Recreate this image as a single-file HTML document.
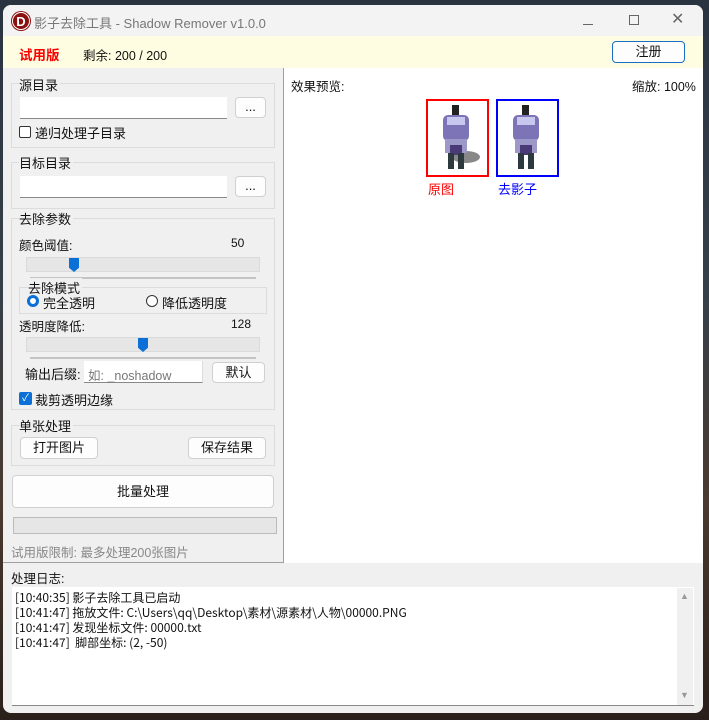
<!DOCTYPE html>
<html><head><meta charset="utf-8"><style>
*{box-sizing:border-box;margin:0;padding:0}
body{width:709px;height:720px;overflow:hidden;background:linear-gradient(180deg,#2a3340 0%,#36404a 40%,#4a3a30 70%,#2a1f1a 100%);font-family:"Liberation Sans","Noto Sans CJK SC",sans-serif;font-size:12.5px;color:#111;position:relative}
.a{position:absolute}
#win{left:3px;top:5px;width:700px;height:708px;background:#f0f0f0;border-radius:8px;overflow:hidden}
.grp{border:1px solid #dcdcdc;position:absolute}
.lbl{position:absolute;background:#f0f0f0;font-size:13px;padding-right:2px}
.inp{position:absolute;background:#fff;border-bottom:1px solid #888;height:22px}
.btn{position:absolute;background:#fdfdfd;border:1px solid #d0d0d0;border-radius:4px;text-align:center;font-size:13px}
.track{position:absolute;height:15px;background:#e6e6e6;border:1px solid #dadada}
.line{position:absolute;height:2px;background:#c4c4c4}
.thumb{position:absolute;width:10px;height:14px;background:#0a6fd6;clip-path:polygon(0 0,100% 0,100% 70%,50% 100%,0 70%)}
.log{font-family:"Liberation Sans Narrow","Noto Sans CJK SC",sans-serif}
</style></head><body>
<div id="win" class="a">
 <div class="a" style="left:0;top:0;width:700px;height:31px;background:#f3f3f3"></div>
 <div class="a" style="left:9px;top:7px;width:18px;height:18px;border-radius:50%;background:#8b1010;color:#fff;font-weight:bold;font-size:13px;text-align:center;line-height:18px;border:1.5px solid #fff;box-shadow:0 0 0 1px #8b1010">D</div>
 <div class="a" style="left:31px;top:8px;font-size:13px;color:#777">影子去除工具 - Shadow Remover v1.0.0</div>
 <div class="a" style="left:580px;top:19px;width:10px;height:1px;background:#666"></div>
 <div class="a" style="left:626px;top:10px;width:10px;height:10px;border:1px solid #666"></div>
 <div class="a" style="left:668px;top:4px;font-size:16px;color:#666">✕</div>
 <div class="a" style="left:0;top:31px;width:700px;height:32px;background:#fffde1"></div>
 <div class="a" style="left:16px;top:39px;color:#f00;font-weight:bold;font-size:13.5px">试用版</div>
 <div class="a" style="left:80px;top:40px;font-size:12.5px">剩余: 200 / 200</div>
 <div class="btn" style="left:609px;top:36px;width:73px;height:22px;border:1.5px solid #1a6fc4;line-height:19px">注册</div>
 <div class="a" style="left:280px;top:63px;width:1px;height:495px;background:#a0a0a0"></div>
 <div class="a" style="left:0;top:557px;width:281px;height:1px;background:#a0a0a0"></div>
 <div class="grp" style="left:8px;top:78px;width:264px;height:65px"></div>
 <div class="lbl" style="left:16px;top:70px">源目录</div>
 <div class="inp" style="left:17px;top:92px;width:207px"></div>
 <div class="btn" style="left:232px;top:92px;width:31px;height:21px;line-height:17px">...</div>
 <div class="a" style="left:16px;top:121px;width:12px;height:12px;border:1px solid #333;border-radius:2px;background:#fff"></div>
 <div class="a" style="left:32px;top:118px;font-size:13px">递归处理子目录</div>
 <div class="grp" style="left:8px;top:157px;width:264px;height:47px"></div>
 <div class="lbl" style="left:16px;top:148px">目标目录</div>
 <div class="inp" style="left:17px;top:171px;width:207px"></div>
 <div class="btn" style="left:232px;top:171px;width:31px;height:21px;line-height:17px">...</div>
 <div class="grp" style="left:8px;top:213px;width:264px;height:192px"></div>
 <div class="lbl" style="left:16px;top:204px">去除参数</div>
 <div class="a" style="left:16px;top:230px">颜色阈值:</div>
 <div class="a" style="left:228px;top:231px;font-size:12px">50</div>
 <div class="track" style="left:23px;top:252px;width:234px"></div>
 <div class="line" style="left:27px;top:272px;width:226px"></div>
 <div class="thumb" style="left:66px;top:253px"></div>
 <div class="grp" style="left:16px;top:282px;width:248px;height:27px"></div>
 <div class="lbl" style="left:25px;top:273px">去除模式</div>
 <div class="a" style="left:24px;top:290px;width:12px;height:12px;border-radius:50%;border:3.5px solid #0a6fd6;background:#fff"></div>
 <div class="a" style="left:40px;top:288px;font-size:13px">完全透明</div>
 <div class="a" style="left:143px;top:290px;width:12px;height:12px;border-radius:50%;border:1px solid #333;background:#fff"></div>
 <div class="a" style="left:159px;top:288px;font-size:13px">降低透明度</div>
 <div class="a" style="left:16px;top:311px">透明度降低:</div>
 <div class="a" style="left:228px;top:312px;font-size:12px">128</div>
 <div class="track" style="left:23px;top:332px;width:234px"></div>
 <div class="line" style="left:27px;top:352px;width:226px"></div>
 <div class="thumb" style="left:135px;top:333px"></div>
 <div class="a" style="left:22px;top:359px;font-size:13px">输出后缀:</div>
 <div class="inp" style="left:81px;top:356px;width:119px;height:22px;border-right:1px solid #ddd"></div>
 <div class="a" style="left:85px;top:360px;color:#777;font-size:12.5px">如: _noshadow</div>
 <div class="btn" style="left:209px;top:357px;width:53px;height:21px;line-height:19px">默认</div>
 <div class="a" style="left:16px;top:387px;width:13px;height:13px;border-radius:2px;background:#0a6fd6;color:#fff;font-size:10px;text-align:center;line-height:13px">✓</div>
 <div class="a" style="left:32px;top:385px;font-size:13px">裁剪透明边缘</div>
 <div class="grp" style="left:8px;top:420px;width:264px;height:41px"></div>
 <div class="lbl" style="left:16px;top:411px">单张处理</div>
 <div class="btn" style="left:17px;top:432px;width:78px;height:22px;line-height:20px">打开图片</div>
 <div class="btn" style="left:185px;top:432px;width:78px;height:22px;line-height:20px">保存结果</div>
 <div class="btn" style="left:9px;top:470px;width:262px;height:33px;line-height:31px">批量处理</div>
 <div class="a" style="left:10px;top:512px;width:264px;height:17px;background:#e6e6e6;border:1px solid #bcbcbc"></div>
 <div class="a" style="left:8px;top:537px;color:#888;font-size:12.5px">试用版限制: 最多处理200张图片</div>
 <div class="a" style="left:281px;top:63px;width:419px;height:495px;background:#fff"></div>
 <div class="a" style="left:288px;top:71px;font-size:12.5px">效果预览:</div>
 <div class="a" style="left:629px;top:71px;font-size:12.5px">缩放: 100%</div>
 <div class="a" style="left:423px;top:94px;width:63px;height:78px;border:2px solid #f00">
  <svg width="59" height="74" viewBox="0 0 59 74"><ellipse cx="38" cy="56" rx="14" ry="6" fill="#888"/><rect x="24" y="4" width="7" height="10" fill="#222"/><rect x="15" y="14" width="26" height="26" rx="5" fill="#7d74b8"/><rect x="19" y="16" width="18" height="8" fill="#c8c8ee"/><rect x="17" y="38" width="22" height="14" fill="#9c98c8"/><rect x="22" y="44" width="12" height="10" fill="#4b3a78"/><rect x="20" y="52" width="6" height="16" fill="#2c3a40"/><rect x="30" y="52" width="6" height="16" fill="#2c3a40"/></svg>
 </div>
 <div class="a" style="left:425px;top:174px;color:#f00;font-size:13px">原图</div>
 <div class="a" style="left:493px;top:94px;width:63px;height:78px;border:2px solid #00f">
  <svg width="59" height="74" viewBox="0 0 59 74"><rect x="24" y="4" width="7" height="10" fill="#222"/><rect x="15" y="14" width="26" height="26" rx="5" fill="#7d74b8"/><rect x="19" y="16" width="18" height="8" fill="#c8c8ee"/><rect x="17" y="38" width="22" height="14" fill="#9c98c8"/><rect x="22" y="44" width="12" height="10" fill="#4b3a78"/><rect x="20" y="52" width="6" height="16" fill="#2c3a40"/><rect x="30" y="52" width="6" height="16" fill="#2c3a40"/></svg>
 </div>
 <div class="a" style="left:495px;top:174px;color:#00f;font-size:13px">去影子</div>
 <div class="a" style="left:8px;top:563px;font-size:12.5px">处理日志:</div>
 <div class="a log" style="left:9px;top:582px;width:682px;height:119px;background:#fff;border-bottom:1px solid #888;padding:3px 0 0 3px;font-size:12px;line-height:15px">[10:40:35] 影子去除工具已启动<br>[10:41:47] 拖放文件: C:\Users\qq\Desktop\素材\源素材\人物\00000.PNG<br>[10:41:47] 发现坐标文件: 00000.txt<br>[10:41:47] &nbsp;脚部坐标: (2, -50)</div>
 <div class="a" style="left:674px;top:583px;width:16px;height:117px;background:#f0f0f0"></div>
 <div class="a" style="left:677px;top:586px;font-size:9px;color:#999">▲</div>
 <div class="a" style="left:677px;top:685px;font-size:9px;color:#999">▼</div>
</div>
</body></html>
